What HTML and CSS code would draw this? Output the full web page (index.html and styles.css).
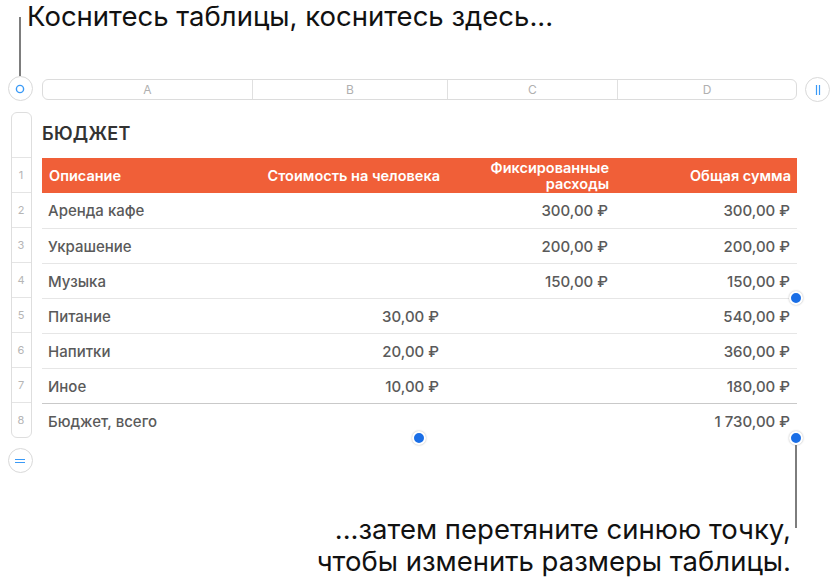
FILE: index.html
```html
<!DOCTYPE html>
<html lang="ru">
<head>
    <meta charset="UTF-8">
    <meta name="viewport" content="width=device-width, initial-scale=1.0">
    <title>Таблица бюджета</title>
    <link rel="stylesheet" href="styles.css">
</head>
<body>
    <div class="page">
        <p class="caption caption-top">Коснитесь таблицы, коснитесь здесь...</p>
        <div class="leader leader-top"></div>

        <div class="sheet">
            <div class="gutter">
                <div class="round-btn">
                    <svg width="10" height="10" viewBox="0 0 10 10"><circle cx="5" cy="5" r="3.6" fill="none" stroke="#3a9af7" stroke-width="1.4"/></svg>
                </div>
                <div class="row-bar">
                    <div class="row-num title-slot"></div>
                    <div class="row-num">1</div>
                    <div class="row-num">2</div>
                    <div class="row-num">3</div>
                    <div class="row-num">4</div>
                    <div class="row-num">5</div>
                    <div class="row-num">6</div>
                    <div class="row-num">7</div>
                    <div class="row-num">8</div>
                </div>
                <div class="round-btn">
                    <svg width="12" height="8" viewBox="0 0 12 8"><path d="M1 2.5H11M1 5.5H11" stroke="#3a9af7" stroke-width="1.2"/></svg>
                </div>
            </div>

            <div class="main">
                <div class="col-head">
                    <div class="col-bar">
                        <div class="col-letter c1">A</div>
                        <div class="col-letter c2">B</div>
                        <div class="col-letter c3">C</div>
                        <div class="col-letter c4">D</div>
                    </div>
                    <div class="round-btn">
                        <svg width="8" height="12" viewBox="0 0 8 12"><path d="M2.5 1V11M5.5 1V11" stroke="#3a9af7" stroke-width="1.2"/></svg>
                    </div>
                </div>

                <h2 class="table-title">БЮДЖЕТ</h2>

                <table class="budget">
                    <colgroup>
                        <col class="c1"><col class="c2"><col class="c3"><col class="c4">
                    </colgroup>
                    <thead>
                        <tr>
                            <th class="left">Описание</th>
                            <th>Стоимость на человека</th>
                            <th>Фиксированные<br>расходы</th>
                            <th>Общая сумма</th>
                        </tr>
                    </thead>
                    <tbody>
                        <tr><td class="left">Аренда кафе</td><td></td><td>300,00 ₽</td><td>300,00 ₽</td></tr>
                        <tr><td class="left">Украшение</td><td></td><td>200,00 ₽</td><td>200,00 ₽</td></tr>
                        <tr><td class="left">Музыка</td><td></td><td>150,00 ₽</td><td>150,00 ₽</td></tr>
                        <tr><td class="left">Питание</td><td>30,00 ₽</td><td></td><td>540,00 ₽</td></tr>
                        <tr><td class="left">Напитки</td><td>20,00 ₽</td><td></td><td>360,00 ₽</td></tr>
                        <tr><td class="left">Иное</td><td>10,00 ₽</td><td></td><td>180,00 ₽</td></tr>
                    </tbody>
                    <tfoot>
                        <tr><td class="left">Бюджет, всего</td><td></td><td></td><td>1 730,00 ₽</td></tr>
                    </tfoot>
                </table>
            </div>
        </div>

        <span class="handle handle-rows"></span>
        <span class="handle handle-cols"></span>
        <span class="handle handle-both"></span>
        <div class="leader leader-bottom"></div>

        <p class="caption caption-bottom">...затем перетяните синюю точку,<br>чтобы изменить размеры таблицы.</p>
    </div>
</body>
</html>
```

FILE: styles.css
```css
body {
    margin: 0;
    background-color: #ffffff;
    font-family: Inter, "Noto Sans", sans-serif;
}
.page {
    position: relative;
    width: 838px;
    height: 585px;
    overflow: hidden;
}
.caption {
    margin: 0;
    font-size: 27.5px;
    line-height: 32px;
    color: #111;
}
.caption-top {
    padding: 0 0 0 27px;
}
.caption-bottom {
    text-align: right;
    padding-right: 47px;
    margin-top: 40px;
}
/* Выноски */
.leader {
    position: absolute;
    width: 2px;
    background-color: #7d7d7d;
}
.leader-top {
    left: 19px;
    top: 17px;
    height: 59px;
}
.leader-bottom {
    left: 795px;
    top: 445px;
    height: 83px;
}
.sheet {
    display: flex;
    margin-top: 44px;
}
.gutter {
    width: 42px;
    display: flex;
    flex-direction: column;
    align-items: center;
    padding-left: 2px;
    box-sizing: border-box;
}
.round-btn {
    width: 23px;
    height: 23px;
    border: 1px solid #d9d9d9;
    border-radius: 50%;
    display: flex;
    align-items: center;
    justify-content: center;
    background: #fff;
    flex-shrink: 0;
}
.gutter .round-btn:first-child {
    margin-left: -4px;
}
.gutter .round-btn:last-child {
    margin-top: 10px;
    margin-left: -4px;
}
.row-bar {
    margin-top: 11px;
    width: 19px;
    border: 1px solid #dedede;
    border-radius: 6px;
    margin-left: -2px;
}
.row-num {
    height: 34px;
    border-top: 1px solid #e4e4e4;
    font-size: 11px;
    line-height: 34px;
    color: #b5b5b5;
    text-align: center;
}
.row-num.title-slot {
    height: 44px;
    border-top: none;
}
.main {
    width: 755px;
}
.col-head {
    display: flex;
    align-items: center;
    margin-top: 1px;
}
.col-bar {
    width: 753px;
    height: 19px;
    border: 1px solid #dcdcdc;
    border-radius: 6px;
    display: flex;
    margin-right: 8px;
    flex-shrink: 0;
}
.col-letter {
    font-size: 12px;
    line-height: 19px;
    color: #b0b0b0;
    text-align: center;
    border-left: 1px solid #e0e0e0;
}
.col-letter:first-child {
    border-left: none;
}
.col-letter.c1 { width: 209px; }
.col-letter.c2 { width: 194px; }
.col-letter.c3 { width: 169px; }
.col-letter.c4 { flex: 1; }
.table-title {
    margin: 0;
    height: 56px;
    padding-top: 21px;
    box-sizing: border-box;
    font-size: 18px;
    font-weight: 600;
    line-height: 22px;
    color: #333;
    letter-spacing: 0.3px;
}
.budget {
    width: 755px;
    border-collapse: collapse;
    table-layout: fixed;
    font-size: 15px;
}
col.c1 { width: 210px; }
col.c2 { width: 194px; }
col.c3 { width: 169px; }
col.c4 { width: 182px; }
.budget th {
    background-color: #f05f38;
    color: #fff;
    font-weight: 600;
    height: 35px;
    padding: 0 6px 0 7px;
    text-align: right;
    line-height: 16px;
    font-size: 14.5px;
}
.budget td {
    height: 34px;
    padding: 0 7px 0 6px;
    text-align: right;
    color: #5a5a5a;
    font-weight: 500;
    border-top: 1px solid #e6e6e6;
}
.budget tbody tr:first-child td {
    border-top: none;
    height: 35px;
}
.budget tfoot td {
    border-top: 1px solid #c9c9c9;
}
.budget .left {
    text-align: left;
}
/* Синие маркеры */
.handle {
    position: absolute;
    width: 10px;
    height: 10px;
    border-radius: 50%;
    background-color: #1a6ee6;
    border: 2px solid #fff;
    box-shadow: 0 0 2px rgba(0, 0, 0, 0.3);
}
.handle-rows {
    left: 789px;
    top: 291px;
}
.handle-cols {
    left: 412px;
    top: 431px;
}
.handle-both {
    left: 789px;
    top: 431px;
}
```
